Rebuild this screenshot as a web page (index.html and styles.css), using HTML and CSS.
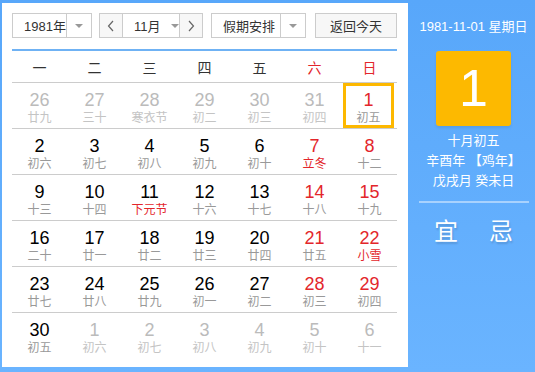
FILE: index.html
```html
<!DOCTYPE html>
<html lang="zh-CN">
<head>
  <meta charset="UTF-8" />
  <title>万年历</title>
  <link rel="stylesheet" href="styles.css">
</head>
<body>
  <div class="calendar">
    <div class="main">
      <div class="toolbar">
        <div class="select year">
          <span class="label">1981年</span>
          <span class="arrow-box"><i class="caret"></i></span>
        </div>
        <div class="month-group">
          <span class="nav-btn"><svg width="8" height="12" viewBox="0 0 8 12"><polyline points="6,1 1.5,6 6,11" fill="none" stroke="#666" stroke-width="1.2"/></svg></span>
          <span class="month-label">11月<i class="caret"></i></span>
          <span class="nav-btn"><svg width="8" height="12" viewBox="0 0 8 12"><polyline points="2,1 6.5,6 2,11" fill="none" stroke="#666" stroke-width="1.2"/></svg></span>
        </div>
        <div class="select holiday">
          <span class="label">假期安排</span>
          <span class="arrow-box"><i class="caret"></i></span>
        </div>
        <div class="today-btn">返回今天</div>
      </div>

      <div class="week">
        <span>一</span><span>二</span><span>三</span><span>四</span><span>五</span><span class="red">六</span><span class="red">日</span>
      </div>

      <div class="row">
        <div class="day other"><b>26</b><em>廿九</em></div>
        <div class="day other"><b>27</b><em>三十</em></div>
        <div class="day other"><b>28</b><em>寒衣节</em></div>
        <div class="day other"><b>29</b><em>初二</em></div>
        <div class="day other"><b>30</b><em>初三</em></div>
        <div class="day other"><b>31</b><em>初四</em></div>
        <div class="day weekend selected"><b>1</b><em>初五</em></div>
      </div>
      <div class="row">
        <div class="day"><b>2</b><em>初六</em></div>
        <div class="day"><b>3</b><em>初七</em></div>
        <div class="day"><b>4</b><em>初八</em></div>
        <div class="day"><b>5</b><em>初九</em></div>
        <div class="day"><b>6</b><em>初十</em></div>
        <div class="day weekend"><b>7</b><em class="fest">立冬</em></div>
        <div class="day weekend"><b>8</b><em>十二</em></div>
      </div>
      <div class="row">
        <div class="day"><b>9</b><em>十三</em></div>
        <div class="day"><b>10</b><em>十四</em></div>
        <div class="day"><b>11</b><em class="fest">下元节</em></div>
        <div class="day"><b>12</b><em>十六</em></div>
        <div class="day"><b>13</b><em>十七</em></div>
        <div class="day weekend"><b>14</b><em>十八</em></div>
        <div class="day weekend"><b>15</b><em>十九</em></div>
      </div>
      <div class="row">
        <div class="day"><b>16</b><em>二十</em></div>
        <div class="day"><b>17</b><em>廿一</em></div>
        <div class="day"><b>18</b><em>廿二</em></div>
        <div class="day"><b>19</b><em>廿三</em></div>
        <div class="day"><b>20</b><em>廿四</em></div>
        <div class="day weekend"><b>21</b><em>廿五</em></div>
        <div class="day weekend"><b>22</b><em class="fest">小雪</em></div>
      </div>
      <div class="row">
        <div class="day"><b>23</b><em>廿七</em></div>
        <div class="day"><b>24</b><em>廿八</em></div>
        <div class="day"><b>25</b><em>廿九</em></div>
        <div class="day"><b>26</b><em>初一</em></div>
        <div class="day"><b>27</b><em>初二</em></div>
        <div class="day weekend"><b>28</b><em>初三</em></div>
        <div class="day weekend"><b>29</b><em>初四</em></div>
      </div>
      <div class="row last">
        <div class="day"><b>30</b><em>初五</em></div>
        <div class="day other"><b>1</b><em>初六</em></div>
        <div class="day other"><b>2</b><em>初七</em></div>
        <div class="day other"><b>3</b><em>初八</em></div>
        <div class="day other"><b>4</b><em>初九</em></div>
        <div class="day other"><b>5</b><em>初十</em></div>
        <div class="day other"><b>6</b><em>十一</em></div>
      </div>
    </div>

    <div class="side">
      <div class="side-date">1981-11-01 星期日</div>
      <div class="big-day">1</div>
      <div class="lunar">
        <p>十月初五</p>
        <p>辛酉年 【鸡年】</p>
        <p>戊戌月 癸未日</p>
      </div>
      <div class="divider"></div>
      <div class="yiji">
        <span>宜</span>
        <span>忌</span>
      </div>
    </div>
  </div>
</body>
</html>
```

FILE: styles.css
```css
* {
  box-sizing: border-box;
}

body {
  margin: 0;
  padding: 0;
  font-family: "Liberation Sans", "Noto Sans CJK SC", sans-serif;
  color: #333;
  background: #5ba9fb;
}

.calendar {
  display: flex;
  width: 535px;
  height: 372px;
  background: linear-gradient(180deg, #58a7fa 0%, #6ab4ff 100%);
}

.main {
  width: 406px;
  height: 364px;
  margin: 3px 0 0 2px;
  padding: 10px 11px 0 10px;
  background: #fff;
}

/* toolbar */
.toolbar {
  display: flex;
  height: 25px;
  font-size: 13px;
  white-space: nowrap;
}

.select,
.month-group,
.today-btn {
  display: flex;
  flex-shrink: 0;
  height: 25px;
  border: 1px solid #ccc;
  background: #fff;
}

.select .label {
  flex: 1;
  display: flex;
  align-items: center;
  padding-left: 11px;
  border-right: 1px solid #ccc;
}

.arrow-box {
  width: 24px;
  flex-shrink: 0;
  display: flex;
  align-items: center;
  justify-content: center;
}

.caret {
  display: inline-block;
  flex-shrink: 0;
  width: 0;
  height: 0;
  border-left: 4px solid transparent;
  border-right: 4px solid transparent;
  border-top: 4px solid #999;
}

.year {
  width: 80px;
}

.month-group {
  width: 104px;
  margin-left: 7px;
}

.nav-btn {
  width: 23px;
  flex-shrink: 0;
  display: flex;
  align-items: center;
  justify-content: center;
  background: #f7f7f7;
}

.nav-btn:first-child {
  border-right: 1px solid #ccc;
}

.nav-btn:last-child {
  border-left: 1px solid #ccc;
}

.month-label {
  flex: 1;
  display: flex;
  align-items: center;
  gap: 10px;
  padding-left: 11px;
}

.holiday {
  width: 95px;
  margin-left: 8px;
}

.today-btn {
  width: 82px;
  margin-left: 9px;
  align-items: center;
  justify-content: center;
  background: #f7f7f7;
}

/* week header */
.week {
  display: grid;
  grid-template-columns: repeat(7, 55px);
  height: 34px;
  margin-top: 11px;
  border-top: 2px solid #6fb2f4;
  border-bottom: 1px solid #ccc;
  font-size: 14px;
  align-items: center;
  text-align: center;
}

.red {
  color: #e3262b;
}

/* days */
.row {
  display: grid;
  grid-template-columns: repeat(7, 55px);
  height: 46px;
  border-bottom: 1px solid #ccc;
}

.row.last {
  border-bottom: none;
}

.day {
  display: flex;
  flex-direction: column;
  align-items: center;
  padding-top: 6px;
}

.day b {
  font-weight: normal;
  font-size: 18px;
  line-height: 22px;
  color: #000;
}

.day em {
  font-style: normal;
  font-size: 12px;
  line-height: 14px;
  color: #999;
}

.day.weekend b {
  color: #e3262b;
}

.day em.fest {
  color: #e3262b;
}

.day.other b {
  color: #bbb;
}

.day.other em {
  color: #c4c4c4;
}

.day.selected {
  margin: 0 3px 2px 1px;
  padding-top: 3px;
  border: 3px solid #fdb800;
}

/* side panel */
.side {
  flex: 1;
  display: flex;
  flex-direction: column;
  align-items: center;
  color: #fff;
  padding: 18px 0 0 4px;
}

.side-date {
  font-size: 13px;
  line-height: 18px;
}

.big-day {
  width: 75px;
  height: 75px;
  margin-top: 15px;
  border-radius: 3px;
  background: #fdb900;
  font-size: 52px;
  line-height: 75px;
  text-align: center;
  box-shadow: 0 2px 3px rgba(0, 0, 0, 0.08);
}

.lunar {
  margin-top: 5px;
  text-align: center;
  font-size: 13px;
}

.lunar p {
  margin: 0;
  line-height: 20px;
}

.divider {
  width: 110px;
  height: 2px;
  margin-top: 10px;
  background: rgba(255, 255, 255, 0.45);
}

.yiji {
  display: flex;
  gap: 31px;
  margin-top: 14px;
  font-size: 24px;
  line-height: 30px;
  text-shadow: 1px 2px 2px rgba(0, 0, 0, 0.15);
}
```
